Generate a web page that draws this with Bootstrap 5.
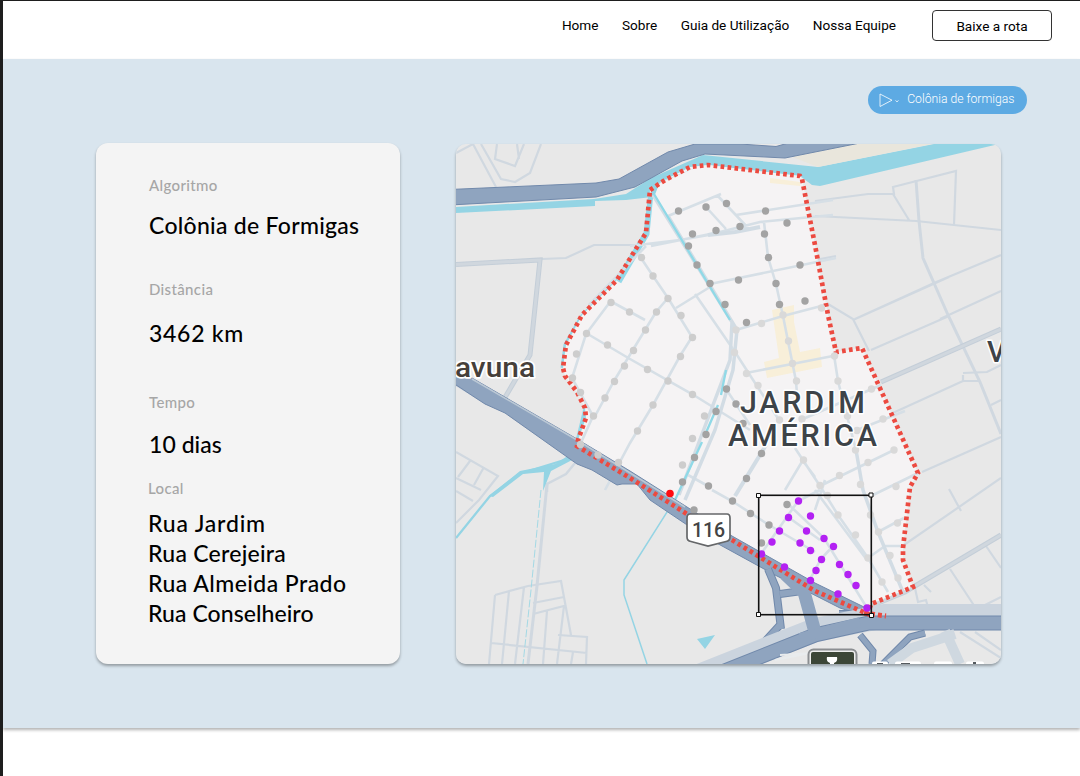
<!DOCTYPE html>
<html lang="pt-BR">
<head>
<meta charset="utf-8">
<meta name="viewport" content="width=device-width, initial-scale=1">
<title>Colônia de Formigas</title>
<link rel="stylesheet" href="https://cdn.jsdelivr.net/npm/bootstrap@5.3.0/dist/css/bootstrap.min.css">
<style>
html,body{height:100%;overflow:hidden}
body{font-family:Roboto,sans-serif;color:#000;background:#fff;border-left:3px solid #1e1e1e;border-top:1px solid #1e1e1e}
.topbar{height:58px;padding:9px 28px 0 0;font-size:13.6px}
.topbar .nav{gap:23.5px;margin-right:36px}
.topbar .nav-link{padding:0;color:#000;line-height:30px}
.btn-route{width:120px;height:31px;padding:0;font-size:13.6px;line-height:28px;border:1px solid #333;border-radius:4px;color:#000}
.stage{height:669px;background:#d9e5ee;box-shadow:0 2px 3px rgba(0,0,0,.3)}
.algo-pill{height:28px;width:159px;margin:26.5px 53px 0 0;padding:0 12.5px 0 11px;background:#5daae3;color:#fff;border:0;font-size:12.2px;font-weight:300}
.panels{margin:30.500px 79px 0 92.500px;gap:56.500px}
.info{width:304px;height:521px;padding:30px 0 0 53.500px;background:#f4f4f4;border:0;border-radius:12px;box-shadow:0 2px 3px rgba(0,0,0,.32);font-family:Lato,sans-serif;margin-top:-1px}
.info dt{font-weight:500;color:#a6a6a6;font-size:15px;line-height:24px;letter-spacing:.35px}
.info dd{font-weight:500;font-size:23px;line-height:30px;margin:0;white-space:nowrap}
.map-box{width:545px;height:520px;border-radius:10px;overflow:hidden;box-shadow:0 2px 3px rgba(0,0,0,.32)}
.map-box svg{display:block}
.v-algo{padding-top:13px;letter-spacing:.28px}
.v-dist{padding-top:17px;letter-spacing:.72px}
.v-time{padding-top:15px;letter-spacing:.05px}
.v-place{padding-top:8px;margin-left:-1px!important}
.ls-a{letter-spacing:.8px}.ls-b{letter-spacing:.25px}.ls-c{letter-spacing:.44px}.ls-d{letter-spacing:.06px}
</style>
</head>
<body>
<header class="topbar d-flex justify-content-end">
  <nav class="nav">
    <a class="nav-link" href="#">Home</a><a class="nav-link" href="#">Sobre</a><a class="nav-link" href="#">Guia de Utilização</a><a class="nav-link" href="#">Nossa Equipe</a>
  </nav>
  <button class="btn btn-route">Baixe a rota</button>
</header>
<main class="stage">
  <div class="d-flex justify-content-end">
    <button class="algo-pill rounded-pill d-flex align-items-center justify-content-between">
      <svg width="22" height="16" viewBox="0 0 22 16" fill="none" stroke="#fff" stroke-width=".8"><path d="M1 2v12.500L13 8.200zM16.500 8.500l1.500 1.300 1.500-1.300"/></svg>
      <span>Colônia de formigas</span>
    </button>
  </div>
  <div class="panels d-flex">
    <section class="card info">
      <dl class="m-0">
        <dt>Algoritmo</dt><dd class="v-algo">Colônia de Formigas</dd>
        <dt style="margin-top:37px">Distância</dt><dd class="v-dist">3462 km</dd>
        <dt style="margin-top:42px">Tempo</dt><dd class="v-time">10 dias</dd>
        <dt style="margin:17px 0 0 -1px">Local</dt>
        <dd class="v-place"><span class="ls-a">Rua Jardim</span><br><span class="ls-b">Rua Cerejeira</span><br><span class="ls-c">Rua Almeida Prado</span><br><span class="ls-d">Rua Conselheiro</span></dd>
      </dl>
    </section>
    <section class="map-box">
<svg width="545" height="520" viewBox="456 144 545 520" fill="none">
<defs><path id="dist" d="M650 190L665 180 690 167 708 165 800 176 802 179 815 245 828 315 836 352 862 348 918 473 910 487 903 548 903 560 913 587 871 604 868 614 815 591 732 540 687 514 630 478 577 446 578 440 586 418 585 408 577 392 565 376 563 368 566 345 582 315 617 280 634 252 646 233Z"/></defs>
<path fill="#e8e8e8" d="M456 144h545v520H456z"/>
<!-- outer streets -->
<g stroke="#d0d8e0" stroke-width="2.200">
<path d="M456 153L473 144 496 187M481 144L501 179 515 182 530 173 541 144M497 144L495 159 515 166 524 144M517 144L519 159M542 259L566 258 594 245H650M815 201L868 194H894L893 187 956 171 954 225M893 194L909 220M815 216L916 221 1001 230M815 260L836 256M855 319L934 283 1001 255M940 319L1001 291M828 304L853 319 869 351M853 320L949 277M871 350L949 316M963 373L987 372 1001 365M963 375V381H980M963 381L884 417M1001 437L922 472M991 405L1001 400M871 557L904 545 1001 478M949 489L961 511M986 546L1001 568M950 569L977 610M915 588L918 602 926 600 930 615M924 585L931 592M977 609L1001 597M960 632L1001 658M975 632L1001 650"/>
<path d="M916 180L919 221 923 258 948 315 980 382 1001 434" stroke-width="3"/>
<path d="M456 452L498 476 479 500 456 523M470 461L458 477M484 467L474 485M456 478L481 490M456 491L473 501"/>
<path d="M495 595L528 586 561 581 571 635M495 595L489 664M509 591L502 664M524 587L515 664M533 603L564 597M533 614L564 606 557 664M547 611L543 664M491 643L587 653M558 635L587 637 586 664M573 652L571 664"/>
<path d="M547 484L537 586 528 664" stroke-width="3"/>
<path d="M575 463L566 474 547 484V492" stroke-width="2.500"/>
</g>
<path d="M456 264.500L540 260 530 355 504 399M881 382L1001 329M871 606L905 592 1001 535" stroke="#c4ced8" stroke-width="5"/><path d="M456 264.500L540 260 530 355 504 399M881 382L1001 329M871 606L905 592 1001 535" stroke="#d0d7de" stroke-width="3"/>
<!-- canal north and the ring road -->
<path fill="#94d4e4" d="M456 207L594 199 626 194 651 178 703 155 818 167 934 144H999L820 186 812 185 800 176 708 165 688 169 660 182 652 197 626 200 595 201V206L456 213z"/>
<path fill="#e9e6dc" d="M790 156L842 144H932L818 167z"/>
<path fill="#8fa4bf" stroke="#7189ab" d="M450 189.500L596 183 619 179 668 152 695 144 740 144 776 146.500 792 142 870 141 785 158 705 154 682 161 635 187 596 197 450 205z"/>
<path d="M651 193L646 233 617 282 582 317 566 345 563 368M586 408L578 441" stroke="#94d9e9" stroke-width="5"/>
<use href="#dist" fill="#f5f3f4"/>
<path d="M651 193L647 234 619 282" stroke="#94d9e9" stroke-width="5"/>
<path fill="#94d4e4" d="M652 186L700 166 660 182 654 197 650 197z"/>
<g fill="#f8efd9"><path d="M772 310L794 305V322L800 352 820 348 822 367 767 378 764 362 779 358zM770 178L800 182V186L770 183z"/></g>
<!-- district streets -->
<g stroke="#d6dfe6" stroke-width="2.600">
<path d="M668 216L721 194M717 195L749 229M706 207L726 229M736 215L833 200M651 246L720 232 760 222 833 215M630 246L680 240 720 233M764 222L768 257 776 284 783 316 788 341 796 381 797 395M710 284L836 258M710 287L676 308M646 246L589 305M641 258L653 276 668 298 692 337 680 356 653 405 630 443 605 490M586 333L630 359 692 394 750 430M612 302L645 320M645 330L656 312 668 298M645 330L614 381 594 418M610 302L586 334 572 378 593 416 580 445M695 294L735 352 779 420M736 330L783 316 825 305M746 373L792 364 838 355M834 355L838 381 847 416 856 450M726 389L750 425M688 475L708 486M712 490L732 501 769 525 815 552M761 554L798 501 820 490M787 503L824 538 867 608M795 448L820 486 838 515 868 558 888 592M809 581L821 559 833 546M803 461L815 477M857 430L905 411M820 486L894 450M871 496L918 473M878 532L904 518M868 558L885 546H904M788 517L820 540M803 419L881 385M825 480L815 510M815 490L867 560M803 460L785 490"/>
<path d="M580 445L688 509"/>
</g>
<path d="M653 195L732 322 730 360 679 495M668 216L737 330 733 370 715 430 685 500M856 450L863 490 878 532 903 592" stroke="#d2dce4" stroke-width="3.500"/>
<path d="M708 235L735 232 760 227M735 496L766 445" stroke="#d2dce4" stroke-width="4"/>
<path d="M654 194L730 320M726 370L721 395M718 405L705 435M702 442L675 500" stroke="#8fd9e7" stroke-width="2.300"/>
<!-- southern water -->
<path d="M456 538L490 496 519 474 574 457" stroke="#94d4e4" stroke-width="2.300"/>
<path fill="#94d4e4" d="M489 496L520 471 555 464 574 452V459L551 471 543 491 544 472 523 474 493 497zM697 639L715 635 705 649z"/>
<path d="M674 501L624 580V595L647 664" stroke="#94d4e4" stroke-width="1.500"/><path d="M541 490L531 590 523 664" stroke="#a4d9e5" stroke-dasharray="8 2"/>
<!-- highways -->
<path d="M456 384L487 403" stroke="#cad3dd" stroke-width="4"/>
<path fill="#8fa4bf" stroke="#7189ab" d="M450 374L472 378 577 439 630 471 687 507 732 536 815 583 864 607 890 612 888 623 840 608 775 575 702 535 650 500 637 484 622 484 617 485 592 470 577 464 505 413 485 404 450 381z"/>
<path d="M472 379L577 440 685 507" stroke="#bbc8d5" stroke-width="1.500"/>
<path d="M768 569L776 588 781 629M780 594L802 591M780 625L759 648M855 614L839 614" stroke="#7189ab" stroke-width="8"/>
<path d="M768 569L776 588 781 629M780 594L802 591M780 625L759 648M855 614L839 614" stroke="#8fa4bf" stroke-width="6"/>
<path d="M699 676L815 630 885 616H1005" stroke="#cbd4de" stroke-width="24"/>
<path d="M717 674L815 635 869 623H1005" stroke="#7189ab" stroke-width="15"/><path d="M717 674L815 635 869 623H1005" stroke="#8fa4bf" stroke-width="13"/>
<path d="M785 574L804 592 815 632" stroke="#8fa4bf" stroke-width="13"/>
<path d="M800 638L860 622" stroke="#8fa4bf" stroke-width="10"/>
<path d="M860 635L873 651 872 664M925 633L910 637 883 664" stroke="#7189ab" stroke-width="7"/><path d="M860 635L873 651 872 664M925 633L910 637 883 664" stroke="#8fa4bf" stroke-width="5"/>
<path d="M945 631L960 664M890 664L912 648 955 634" stroke="#cfd8e0" stroke-width="10"/>
<path d="M775 660L830 649M780 655L814 653" stroke="#e9ecee" stroke-width="2"/>
<use href="#dist" stroke="#ec4a40" stroke-width="4.700" stroke-dasharray="3.700 3.300"/>
<path d="M864 613L886 616" stroke="#ec4a40" stroke-width="5" stroke-dasharray="4 3"/>
<g id="nodes"></g>
<circle cx="670" cy="493.500" r="3.800" fill="#ff0d12"/>
<!-- labels -->
<g font-family="Roboto,sans-serif" stroke="#fff" paint-order="stroke" stroke-linejoin="round">
<g fill="#3d4348" font-size="30.500" font-weight="500" stroke-width="3"><text x="740" y="412.500" textLength="125">JARDIM</text><text x="728" y="445.500" textLength="149">AMÉRICA</text></g>
<text x="455" y="377" font-size="28.500" font-weight="500" fill="#463f3a" stroke-width="3.500" textLength="80" lengthAdjust="spacingAndGlyphs">avuna</text>
<text x="987" y="361.500" font-size="29" font-weight="500" fill="#3d4348" stroke-width="3">V</text>
</g>
<path d="M874 663.500h12M897 663.500h22M936 663.500h14M968 663.500h14" stroke="#fff" stroke-width="4" stroke-linecap="round"/><path d="M877 664h6M901 664h9M973 663h3" stroke="#555a5e" stroke-width="2"/>
<path d="M690 514H727Q730 514 730 518V537Q730 541 726 541.500L708 546 691 541.500Q687 541 687 537V518Q687 514 690 514z" fill="#fff" stroke="#656769" stroke-width="1.700"/>
<text x="692" y="537" font-family="Roboto,sans-serif" font-size="19.500" font-weight="500" fill="#444" textLength="33">116</text>
<rect x="808.500" y="649.500" width="48" height="22" rx="5" fill="#eee" stroke="#8b8e91" stroke-width="2"/><rect x="811" y="652" width="43" height="20" rx="2" fill="#3c4637"/><path d="M827 657H837Q838 662 834 663V665H830V663Q826 662 827 657z" fill="#fff"/>
<!-- selected area -->
<rect x="758.700" y="495.300" width="112.600" height="119.400" stroke="#111" stroke-width="1.600"/>
<g fill="#fff" stroke="#111"><path d="M756.500 493.500h4v4h-4zM869 493h4v4h-4zM756.500 612.500h4v4h-4zM869.500 613.500h4v4h-4z"/></g>
</svg>
    </section>
  </div>
</main>
<script src="https://cdn.jsdelivr.net/npm/bootstrap@5.3.0/dist/js/bootstrap.bundle.min.js"></script>
<script>
// Route stops, grouped by state colour
const stops = {
 '#a3a3a3':'678.500,211 706,207 726.500,203.500 765.500,211 787,223 740,226.500 716,230.500 692.500,234 764.500,234 688.500,246 768.500,257.500 697,265 800,265 738.500,280 710,283.500 776,283.500 725,304.500 779.500,304.500 805,301 746.500,322.500 726.500,389 736,404 716,411.500 743,423.500 706,434.500 694.500,457.500 761.500,453.500 746.500,478.500 682.500,482 708.500,486 694,510 732.500,501 750.500,513.500 769,525 761.500,543 787,504.500',
 '#cdcdcd':'641.500,257.500 653,276 668,298.500 611,302.500 629.500,312 656.500,312 681,315.500 586.500,333.500 607.500,345 633.500,350.500 645.500,330 692.500,337.500 624.500,366 680.500,356.500 576.500,354 572.500,378 614.500,381.500 647.500,369.500 668,381 580.500,392.500 605,398 593.500,416 692.500,394.500 704.500,416 653,405 637.500,431 580.500,444.500 692.500,438.500 682.500,465 598,455 618.500,462.500',
 '#d9d9d9':'783,315 761.500,323.500 736,330 788.500,341 821.500,308 734.500,352.500 746.500,373.500 792.500,363.500 758,385.500 796.500,381 834.500,356 838,381 779.500,420 802,419 871.500,389 847.500,416 883,419 857,430.500 855.500,450 803.500,460 894,450 868,462.500 839.500,475.500 820,485.500 860.500,484.500 896,486.500 827.500,495.500 838,515 870.500,515 897.500,523 855.500,535 878.500,532 890,555.500 868,558 898,578 882,582',
 '#b321f3':'798.500,501 788.500,517.500 810.500,516 779.500,531 806.500,531 772,542 800,543 824,538.500 833.500,546.500 810.500,550.500 761.500,554 821.500,559.500 784.500,567 816,570.500 839.500,564.500 848,574.500 810.500,580.500 856,585.500 838,594 867,608'
};
document.getElementById('nodes').innerHTML = Object.entries(stops).map(([c,p]) =>
  p.split(' ').map(s => { const [x,y]=s.split(','); return `<circle cx="${x}" cy="${y}" r="3.7" fill="${c}"/>`; }).join('')).join('');
</script>
</body>
</html>
